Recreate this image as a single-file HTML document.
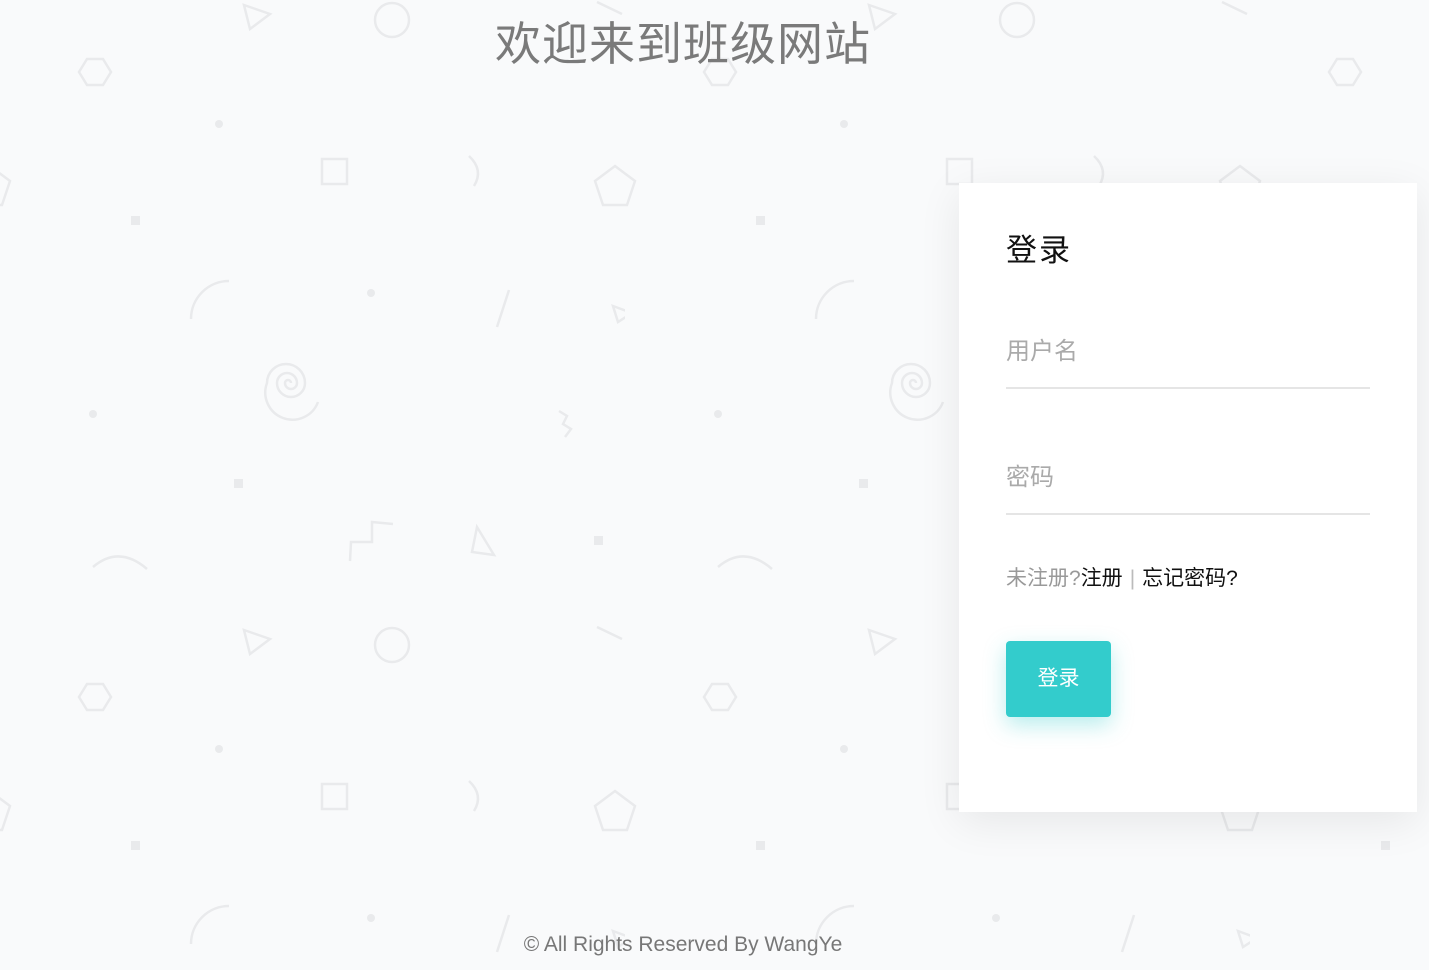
<!DOCTYPE html>
<html><head><meta charset="utf-8"><style>
*{margin:0;padding:0;box-sizing:border-box}
html,body{width:1429px;height:970px;overflow:hidden;background:#f9fafb;font-family:"Liberation Sans","Noto Sans CJK SC",sans-serif}
svg.bg{position:absolute;left:0;top:0}
h1{position:absolute;left:0;width:1366px;top:14px;text-align:center;font-weight:normal;font-size:46px;color:#7a7a7a;line-height:60px;letter-spacing:1px}
.card{position:absolute;left:959px;top:183px;width:458px;height:629px;background:#fff;box-shadow:0 10px 40px rgba(0,0,0,.08)}
.t{position:absolute;left:47px;top:42px;font-size:31px;color:#111;letter-spacing:2px}
.in{position:absolute;left:47px;width:364px;border-bottom:2px solid #e5e5e5;height:56px;font-size:24px;color:#aaa;line-height:30px;padding-top:4px}
.lk{position:absolute;left:47px;top:379px;font-size:21px;color:#999}
.lk b{font-weight:normal;color:#111}
.lk span{color:#bbb;margin:0 7px}
.btn{position:absolute;left:47px;top:458px;width:105px;height:76px;background:#33cccc;border-radius:4px;color:#fff;font-size:21px;text-align:center;line-height:76px;box-shadow:0 8px 22px rgba(51,204,204,.35)}
.ft{position:absolute;left:0;width:1366px;top:933px;text-align:center;font-size:21px;color:#777}
</style></head><body>
<svg class="bg" width="1429" height="970">
<defs><pattern id="p" width="625" height="625" patternUnits="userSpaceOnUse">
<g fill="none" stroke="#e9eaec" stroke-width="2.5">
<polygon points="244,5 270,14 250,29"/>
<circle cx="392" cy="20" r="17"/>
<polygon points="87,59 103,59 111,72 103,85 87,85 79,72"/>
<rect x="322" y="159" width="25" height="25"/>
<path d="M469,156 Q484,170 474,186"/>
<polygon points="615,166 635,181 627,205 603,205 595,181"/>
<polygon points="-10,166 10,181 2,205 -22,205 -30,181"/>
<path d="M191,319 A38,38 0 0 1 229,281"/>
<path d="M509,290 L497,327"/>
<polygon points="613,306 632,313 618,322"/>
<path d="M291,383 A3,3 0 0 0 285,383 A6,6 0 0 0 297,383 A10,10 0 0 0 277,383 A14,14 0 0 0 305,383 A19,19 0 0 0 267,383 A24,24 0 0 0 318,402"/>
<path d="M559,411 L567,416 L563,424 L571,429 L565,437"/>
<path d="M93,567 Q119,545 147,569"/>
<path d="M350,561 L351,542 L372,542 L372,522 L393,524"/>
<polygon points="477,527 494,555 472,552"/>
<path d="M597,2 L622,14"/>
</g>
<g fill="#e9eaec">
<circle cx="219" cy="124" r="4"/>
<rect x="131" y="216" width="9" height="9"/>
<circle cx="371" cy="293" r="4"/>
<circle cx="93" cy="414" r="4"/>
<rect x="234" y="479" width="9" height="9"/>
<rect x="594" y="536" width="9" height="9"/>
</g>
</pattern></defs>
<rect width="1429" height="970" fill="url(#p)"/>
</svg>
<h1>欢迎来到班级网站</h1>
<div class="card">
<div class="t">登录</div>
<div class="in" style="top:150px">用户名</div>
<div class="in" style="top:276px">密码</div>
<div class="lk">未注册?<b>注册</b><span>|</span><b>忘记密码?</b></div>
<div class="btn">登录</div>
</div>
<div class="ft">© All Rights Reserved By WangYe</div>
</body></html>
